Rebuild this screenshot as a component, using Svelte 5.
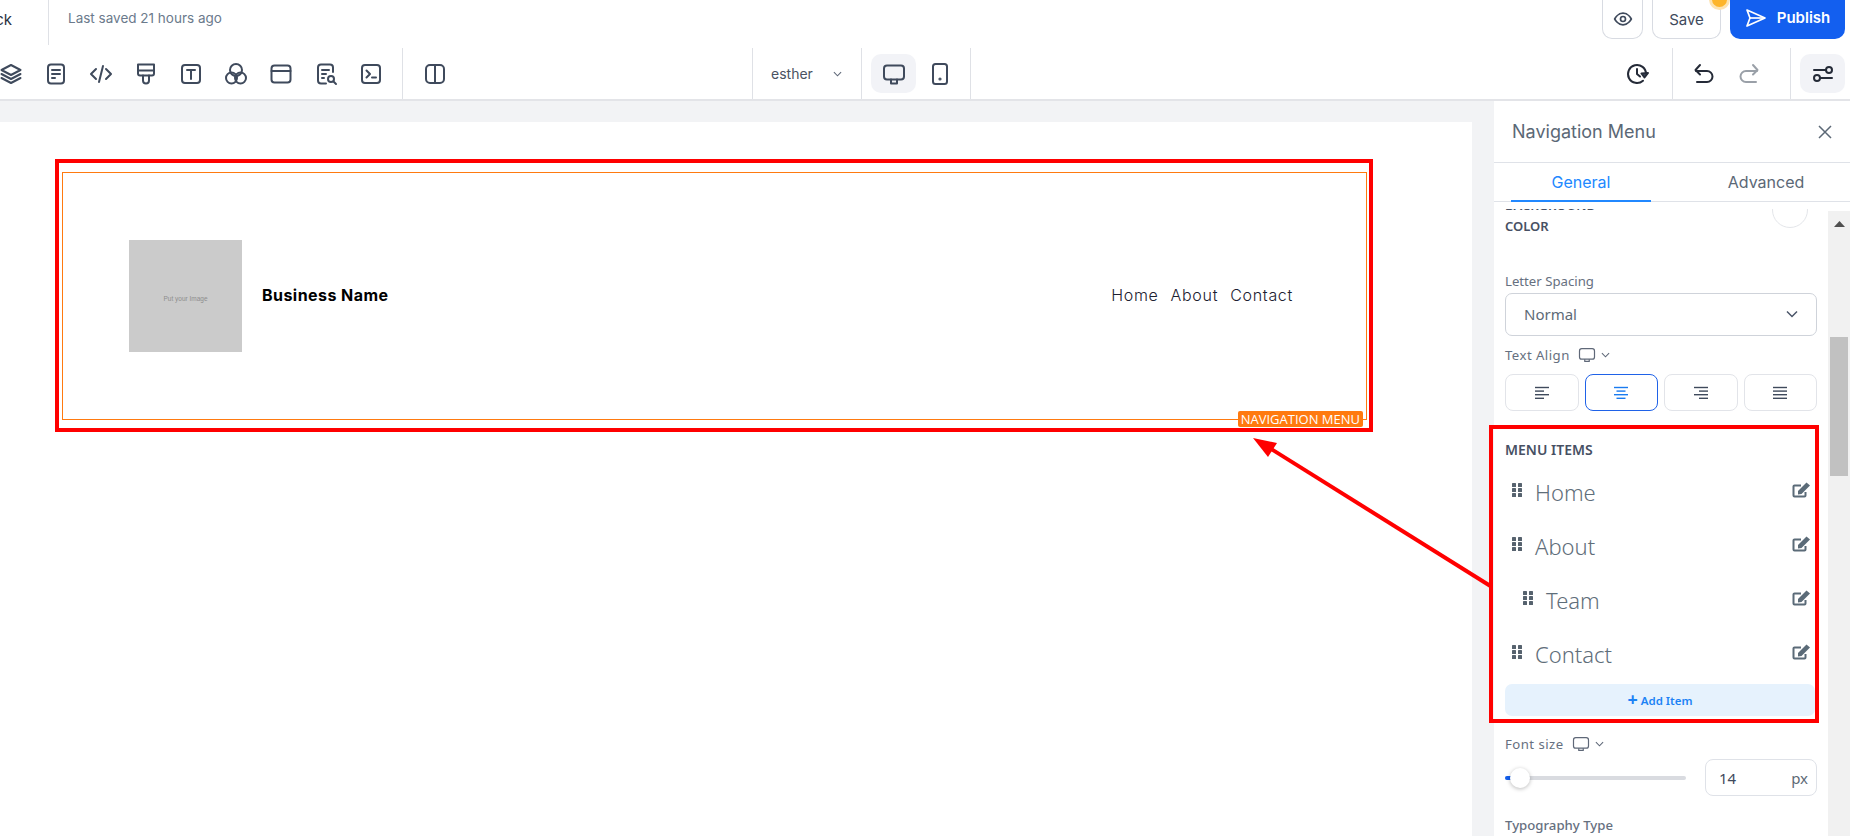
<script>
  const menu = [
    { label: 'Home', sub: false },
    { label: 'About', sub: false },
    { label: 'Team', sub: true },
    { label: 'Contact', sub: false }
  ];
  const aligns = [
    { name: 'left', lines: [[3, 17], [3, 12], [3, 17], [3, 12]] },
    { name: 'center', lines: [[3, 17], [5.5, 14.5], [3, 17], [5.5, 14.5]] },
    { name: 'right', lines: [[3, 17], [8, 17], [3, 17], [8, 17]] },
    { name: 'justify', lines: [[3, 17], [3, 17], [3, 17], [3, 17]] }
  ];
</script>

<div class="app">
  <header class="header">
    <div class="row-top">
      <div class="back"><span>Back</span></div>
      <div class="saved">Last saved 21 hours ago</div>
      <div class="actions">
        <button class="ghost eye" aria-label="Preview">
          <svg width="20" height="20" viewBox="0 0 24 24" fill="none" stroke="#3f4a5c" stroke-width="2"><path d="M2 12s3.6-7 10-7 10 7 10 7-3.6 7-10 7-10-7-10-7z"/><circle cx="12" cy="12" r="3"/></svg>
        </button>
        <div class="save-wrap">
          <button class="ghost save">Save</button>
          <span class="dot"></span>
        </div>
        <button class="publish">
          <svg width="22" height="20" viewBox="0 0 22 20" fill="none" stroke="#fff" stroke-width="1.7" stroke-linejoin="round"><path d="M2 2l18 8-18 8 3-8z"/><path d="M5 10h15"/></svg>
          Publish
        </button>
      </div>
    </div>
    <div class="row-tools">
      <div class="tools">
        <span class="slot"><svg class="ic" viewBox="0 0 24 24"><path d="M12 3l9.500 5-9.500 5-9.500-5z"/><path d="M2.500 12l9.500 5 9.500-5"/><path d="M2.500 16l9.500 5 9.500-5"/></svg></span>
        <span class="slot"><svg class="ic" viewBox="0 0 24 24"><rect x="4" y="2.500" width="16" height="19" rx="3"/><path d="M8 8h8M8 12h8M8 16h3"/></svg></span>
        <span class="slot"><svg class="ic" viewBox="0 0 24 24"><path d="M7 7l-5 5 5 5M17 7l5 5-5 5M14 4l-4 16"/></svg></span>
        <span class="slot"><svg class="ic" viewBox="0 0 24 24"><path d="M4 2.500h16v9a2 2 0 0 1-2 2H6a2 2 0 0 1-2-2z"/><path d="M4 8.500h16"/><path d="M9 13.500v5a3 3 0 0 0 6 0v-5"/></svg></span>
        <span class="slot"><svg class="ic" viewBox="0 0 24 24"><rect x="3" y="3" width="18" height="18" rx="3"/><path d="M8 8h8M12 8v9"/></svg></span>
        <span class="slot"><svg class="ic" viewBox="0 0 24 24"><circle cx="12" cy="8" r="6"/><circle cx="7.500" cy="16" r="5.500"/><circle cx="16.500" cy="16" r="5.500"/></svg></span>
        <span class="slot"><svg class="ic" viewBox="0 0 24 24"><rect x="2.500" y="3.500" width="19" height="17" rx="3"/><path d="M2.500 9h19"/></svg></span>
        <span class="slot"><svg class="ic" viewBox="0 0 24 24"><path d="M19 10V5.500a3 3 0 0 0-3-3H7a3 3 0 0 0-3 3v13a3 3 0 0 0 3 3h5"/><path d="M8 8h7M8 12h4M8 16h2"/><circle cx="17" cy="17" r="3"/><path d="M19.500 19.500L22 22"/></svg></span>
        <span class="slot"><svg class="ic" viewBox="0 0 24 24"><rect x="3" y="3" width="18" height="18" rx="3"/><path d="M7.500 8.500l3.500 3.500-3.500 3.500M13 15.500h4"/></svg></span>
        <span class="vline tools-end"></span>
        <span class="slot split"><svg class="ic" viewBox="0 0 24 24"><rect x="3" y="3" width="18" height="18" rx="4"/><path d="M12 3v18"/></svg></span>
      </div>
      <span class="vline user-start"></span>
      <div class="user">
        <span>esther</span>
        <svg width="9" height="6" viewBox="0 0 10 6" fill="none" stroke="#5f6878" stroke-width="1.2"><path d="M1 1l4 4 4-4"/></svg>
      </div>
      <span class="vline"></span>
      <div class="devices">
        <span class="dev active"><svg class="ic" viewBox="0 0 24 24"><rect x="2" y="3.500" width="20" height="14" rx="3"/><path d="M9 17.500v4h6v-4"/></svg></span>
        <span class="dev"><svg class="ic" viewBox="0 0 24 24"><rect x="5" y="2" width="14" height="20" rx="2.500"/><circle class="fillc" cx="12" cy="17" r="0.600"/></svg></span>
      </div>
      <span class="vline"></span>
      <div class="history">
        <svg class="ic dark" viewBox="0 0 24 24"><path d="M21 12a9 9 0 1 0-3 6.700"/><path d="M12 7v5l3 2.500"/><path class="fillc" d="M23 11l-3.500 4.500-3-4z"/></svg>
      </div>
      <span class="vline"></span>
      <div class="undo">
        <svg class="ic dark" viewBox="0 0 24 24"><path d="M8 3L3.500 8 8 12.500"/><path d="M4 8h11a5.500 5.500 0 0 1 5.500 5.500v0A5.500 5.500 0 0 1 15 19H5" transform="translate(0 1)"/></svg>
        <svg class="ic muted" viewBox="0 0 24 24"><path d="M16 3l4.500 5L16 12.500"/><path d="M20 8H9a5.500 5.500 0 0 0-5.500 5.500v0A5.500 5.500 0 0 0 9 19h10" transform="translate(0 1)"/></svg>
      </div>
      <span class="vline"></span>
      <div class="settings">
        <span class="dev active"><svg class="ic dark" viewBox="0 0 24 24"><path d="M3 8h12M9 16h12"/><circle cx="18" cy="8" r="3"/><circle cx="6" cy="16" r="3"/></svg></span>
      </div>
    </div>
  </header>

  <main class="main">
    <section class="canvas">
      <div class="page">
        <div class="nav-el">
          <div class="thumb"><span>Put your Image</span></div>
          <div class="biz">Business Name</div>
          <nav class="links"><span>Home</span><span>About</span><span>Contact</span></nav>
          <span class="tag">NAVIGATION MENU</span>
        </div>
      </div>
    </section>

    <aside class="panel">
      <div class="p-title">
        <span>Navigation Menu</span>
        <svg width="16" height="16" viewBox="0 0 16 16" fill="none" stroke="#5b6876" stroke-width="1.500"><path d="M2 2l12 12M14 2L2 14"/></svg>
      </div>
      <div class="p-tabs">
        <div class="tab on">General</div>
        <div class="tab">Advanced</div>
      </div>
      <div class="p-body">
        <div class="scroll">
          <div class="bg-row">
            <div class="caps">BACKGROUND<br />COLOR</div>
            <span class="swatch"></span>
          </div>

          <div class="lab ls">Letter Spacing</div>
          <div class="select">
            <span>Normal</span>
            <svg width="12" height="8" viewBox="0 0 12 8" fill="none" stroke="#4a5568" stroke-width="1.500"><path d="M1 1.500l5 5 5-5"/></svg>
          </div>

          <div class="lab ta">
            Text Align
            <svg class="mon" viewBox="0 0 24 24"><rect x="2" y="3.500" width="20" height="14" rx="3"/><path d="M9 17.500v3h6v-3"/></svg>
            <svg class="chev" width="9" height="6" viewBox="0 0 10 6" fill="none" stroke="#5f6878" stroke-width="1.200"><path d="M1 1l4 4 4-4"/></svg>
          </div>
          <div class="aligns">
            {#each aligns as a}
              <div class="al" class:sel={a.name === 'center'}>
                <svg width="20" height="14" viewBox="0 0 20 14">
                  {#each a.lines as l, j}
                    <line x1={l[0]} x2={l[1]} y1={1.500 + j * 3.600} y2={1.500 + j * 3.600} />
                  {/each}
                </svg>
              </div>
            {/each}
          </div>

          <div class="caps mi">MENU ITEMS</div>
          <div class="items">
            {#each menu as m}
              <div class="item" class:sub={m.sub}>
                <svg class="grip" width="10" height="14" viewBox="0 0 10 14">
                  <rect x="0" y="0" width="4" height="4" rx=".6"/><rect x="6" y="0" width="4" height="4" rx=".6"/>
                  <rect x="0" y="5" width="4" height="4" rx=".6"/><rect x="6" y="5" width="4" height="4" rx=".6"/>
                  <rect x="0" y="10" width="4" height="4" rx=".6"/><rect x="6" y="10" width="4" height="4" rx=".6"/>
                </svg>
                <span class="it-label">{m.label}</span>
                <svg class="edit" width="19" height="17" viewBox="0 0 19 17">
                  <path d="M13.500 10v3.500a1 1 0 0 1-1 1H2.500a1 1 0 0 1-1-1V4.500a1 1 0 0 1 1-1H9" fill="none" stroke="#5b6b78" stroke-width="2"/>
                  <path d="M6 9l8.500-8.500 3.500 3L9.500 12 6 12.500z" fill="#5b6b78"/>
                </svg>
              </div>
            {/each}
          </div>
          <div class="add"><span class="plus">+</span> Add Item</div>

          <div class="lab fs">
            Font size
            <svg class="mon" viewBox="0 0 24 24"><rect x="2" y="3.500" width="20" height="14" rx="3"/><path d="M9 17.500v3h6v-3"/></svg>
            <svg class="chev" width="9" height="6" viewBox="0 0 10 6" fill="none" stroke="#5f6878" stroke-width="1.200"><path d="M1 1l4 4 4-4"/></svg>
          </div>
          <div class="size-row">
            <div class="slider"><span class="fill"></span><span class="knob"></span></div>
            <div class="num"><span class="v">14</span><span>px</span></div>
          </div>
          <div class="lab tt">Typography Type</div>
        </div>
        <div class="bar">
          <svg width="11" height="6" viewBox="0 0 11 6"><path d="M5.500 0l5.500 6H0z" fill="#505050"/></svg>
          <span class="thumb-bar"></span>
        </div>
      </div>
    </aside>
  </main>

  <svg class="notes" width="1850" height="836" viewBox="0 0 1850 836">
    <rect x="57" y="161" width="1314" height="269" fill="none" stroke="#ff0000" stroke-width="4"/>
    <rect x="1491" y="427" width="326" height="294" fill="none" stroke="#ff0000" stroke-width="4"/>
    <path d="M1492 587L1268 447" stroke="#ff0000" stroke-width="4" fill="none"/>
    <path d="M1253 438l24 5-9 14z" fill="#ff0000"/>
  </svg>
</div>

<style>
  :global(body) { margin: 0; background: #fff; }
  .app {
    position: relative;
    width: 1850px;
    height: 836px;
    overflow: hidden;
    display: flex;
    flex-direction: column;
    font-family: Inter, "Noto Sans", sans-serif;
    color: #3f4a5c;
  }
  button { font-family: inherit; cursor: pointer; }

  .header {
    height: 101px;
    flex: none;
    box-sizing: border-box;
    border-bottom: 2px solid #e3e4e8;
    background: #fff;
  }
  .row-top { height: 45px; display: flex; align-items: center; margin-bottom: 3px; }
  .back {
    width: 12px;
    height: 39px;
    display: flex;
    justify-content: flex-end;
    align-items: center;
    padding: 0 36px 6px 0;
    border-right: 1px solid #dfe1e6;
    font-size: 15px;
    color: #2b3240;
    white-space: nowrap;
    flex: none;
  }
  .saved { margin-left: 19px; font-size: 13.500px; color: #6b7a8c; position: relative; top: -5px; }
  .actions { margin-left: auto; padding-right: 5px; display: flex; align-self: flex-start; gap: 9px; height: 39px; }
  .ghost {
    background: #fff;
    border: 1px solid #d8dbe2;
    border-top: 0;
    border-radius: 0 0 10px 10px;
    height: 39px;
    padding: 0;
  }
  .eye { width: 41px; display: flex; align-items: center; justify-content: center; }
  .save-wrap { position: relative; }
  .save { width: 69px; font-size: 15px; color: #3f4a5c; }
  .dot {
    position: absolute;
    right: -6px;
    top: -8px;
    width: 15px;
    height: 15px;
    border-radius: 50%;
    background: #fdb52a;
    box-shadow: 0 0 0 3px #fde3b0;
  }
  .publish {
    width: 115px;
    height: 39px;
    border: 0;
    border-radius: 0 0 10px 10px;
    background: #135fef;
    color: #fff;
    font-size: 15px;
    font-weight: 600;
    display: flex;
    align-items: center;
    justify-content: center;
    gap: 10px;
    padding: 0 0 4px;
  }

  .row-tools { height: 51px; display: flex; align-items: stretch; }
  .tools { display: flex; align-items: center; margin-left: -12px; width: 764px; flex: none; }
  .slot { width: 45px; display: flex; justify-content: center; align-items: center; flex: none; }
  .split { margin-left: 9px; }
  .vline { width: 1px; background: #dfe1e6; flex: none; align-self: stretch; }
  .tools-end { margin-left: 9px; height: 51px; }
  .user {
    width: 108px;
    flex: none;
    box-sizing: border-box;
    padding: 0 19px 0 18px;
    display: flex;
    align-items: center;
    justify-content: space-between;
    font-size: 14px;
    color: #4a5262;
  }
  .devices { width: 108px; flex: none; display: flex; align-items: center; padding-left: 9px; box-sizing: border-box; gap: 1px; }
  .dev { width: 45px; height: 39px; border-radius: 10px; display: flex; align-items: center; justify-content: center; flex: none; }
  .dev.active { background: #f2f3f7; }
  .history { width: 701px; flex: none; display: flex; align-items: center; justify-content: flex-end; padding-right: 23px; box-sizing: border-box; }
  .undo { width: 117px; flex: none; display: flex; align-items: center; gap: 21px; padding-left: 19px; box-sizing: border-box; }
  .settings { flex: none; padding-left: 9px; display: flex; align-items: center; }
  .ic {
    width: 24px; height: 24px;
    fill: none;
    stroke: #3f4a5c;
    stroke-width: 2;
    stroke-linecap: round;
    stroke-linejoin: round;
  }
  .ic.dark { stroke: #252b38; }
  .ic.muted { stroke: #9aa0a8; }
  .fillc { fill: currentColor; }

  .main { flex: 1; min-height: 0; display: flex; }
  .canvas { flex: 1; min-width: 0; background: #f2f3f5; padding: 21px 22px 0 0; display: flex; }
  .page { flex: 1; background: #fff; padding: 50px 105px 0 62px; }
  .nav-el {
    position: relative;
    height: 248px;
    box-sizing: border-box;
    border: 1px solid #ff7a0f;
    display: flex;
    align-items: center;
    padding: 0 73px 0 66px;
  }
  .thumb {
    width: 113px;
    height: 112px;
    background: #cbcbcb;
    display: flex;
    align-items: center;
    justify-content: center;
    flex: none;
    margin-top: -1px;
  }
  .thumb span { font: 6.500px "Liberation Sans", sans-serif; color: #8d8d8d; position: relative; top: 3px; }
  .biz { margin: -2px 0 0 20px; font-family: Inter, sans-serif; font-weight: 700; font-size: 16px; color: #000; letter-spacing: .45px; }
  .links { margin: -2px 0 0 auto; display: flex; gap: 12px; font-family: Inter, sans-serif; font-size: 16px; color: #1c2030; font-weight: 300; letter-spacing: .7px; }
  .tag {
    position: absolute;
    right: 3px;
    bottom: -8px;
    height: 16px;
    line-height: 16px;
    padding: 0 3px;
    background: #ff7a0f;
    color: #fff;
    font-family: "Open Sans", sans-serif;
    font-size: 13px;
    border-radius: 2px;
    white-space: nowrap;
  }

  .panel {
    width: 356px;
    flex: none;
    background: #fff;
    display: flex;
    flex-direction: column;
    min-height: 0;
  }
  .p-title {
    height: 62px;
    box-sizing: border-box;
    flex: none;
    border-bottom: 1px solid #dfe2e8;
    display: flex;
    align-items: center;
    justify-content: space-between;
    padding: 0 17px 0 18px;
    font-size: 18px;
    color: #5b6876;
  }
  .p-tabs { height: 39px; box-sizing: border-box; flex: none; display: flex; border-bottom: 1px solid #dfe2e8; padding-left: 17px; }
  .tab { width: 140px; display: flex; align-items: center; justify-content: center; font-size: 16px; color: #5b6876; }
  .tab + .tab { margin-left: 45px; }
  .tab.on { color: #2188ff; box-shadow: 0 1px 0 0 #2188ff, inset 0 -1px 0 0 #2188ff; }

  .p-body { flex: 1; min-height: 0; display: flex; }
  .scroll {
    width: 334px;
    box-sizing: border-box;
    flex: none;
    margin-top: 7px;
    padding: 0 11px 0 11px;
    overflow: hidden;
    font-family: "Noto Sans", sans-serif;
  }
  .bar { flex: 1; margin-top: 9px; background: #f1f1f1; padding-top: 10px; display: flex; flex-direction: column; align-items: center; }
  .thumb-bar { width: 18px; height: 139px; background: #c1c1c1; margin-top: 110px; }

  .caps { font-size: 13px; font-weight: 600; line-height: 21px; color: #475063; }
  .bg-row { display: flex; justify-content: space-between; margin-top: -14px; height: 42px; }
  .swatch {
    width: 36px;
    height: 36px;
    box-sizing: border-box;
    border: 1px solid #e4e6ea;
    border-radius: 50%;
    margin: -3px 9px 0 0;
  }
  .lab { font-size: 13.200px; line-height: 18px; color: #667080; display: flex; align-items: center; gap: 8px; }
  .chev { margin-left: -3px; }
  .ls { margin-top: 35px; }
  .ta { margin-top: 10px; letter-spacing: .45px; }
  .fs { margin-top: 19px; letter-spacing: .45px; }
  .tt { margin-top: 20px; font-weight: 500; }
  .mon { width: 18px; height: 18px; fill: none; stroke: #5f6878; stroke-width: 1.600; stroke-linejoin: round; }
  .select {
    margin-top: 3px;
    height: 43px;
    box-sizing: border-box;
    border: 1px solid #cfd3da;
    border-radius: 7px;
    display: flex;
    align-items: center;
    justify-content: space-between;
    padding: 0 18px 2px;
    font-size: 15px;
    color: #5d6a76;
  }
  .aligns { margin-top: 10px; display: grid; grid-template-columns: repeat(4, 1fr); gap: 6px; }
  .al {
    height: 37px;
    box-sizing: border-box;
    border: 1px solid #e2e4e9;
    border-radius: 8px;
    display: flex;
    align-items: center;
    justify-content: center;
    stroke: #3f4a5c;
  }
  .al line { stroke-width: 1.400; }
  .al.sel { border-color: #1f62e8; stroke: #1a7bf0; }
  .mi { margin-top: 30px; font-size: 14px; line-height: 18px; }
  .items { margin-top: 6px; }
  .item {
    height: 54px;
    display: flex;
    align-items: center;
    padding: 0 6px 0 7px;
  }
  .item.sub { padding-left: 18px; }
  .grip { fill: #56626e; margin-top: -4px; flex: none; }
  .it-label { margin-left: 13px; font-size: 22px; color: #5f6e7a; font-weight: 300; }
  .edit { margin-left: auto; margin-top: -3px; }
  .add {
    margin: 3px 2px 0 0;
    height: 32px;
    background: #e6f2fd;
    border-radius: 7px;
    color: #1c82f5;
    font-size: 11.500px;
    font-weight: 600;
    display: flex;
    align-items: center;
    justify-content: center;
    gap: 3px;
  }
  .plus { font-size: 18px; line-height: 1; font-weight: 700; position: relative; top: -1px; }
  .size-row { margin-top: 6px; height: 37px; display: flex; align-items: center; justify-content: space-between; }
  .slider { position: relative; width: 181px; height: 4px; background: #d9dbe0; border-radius: 2px; }
  .fill { position: absolute; left: 0; top: 0; width: 10px; height: 4px; background: #135fef; border-radius: 2px; }
  .knob {
    position: absolute;
    left: 5px;
    top: -8px;
    width: 20px;
    height: 20px;
    border-radius: 50%;
    background: #fff;
    box-shadow: 0 1px 4px rgba(0, 0, 0, .28);
  }
  .num {
    width: 112px;
    height: 37px;
    box-sizing: border-box;
    border: 1px solid #dfe2e8;
    border-radius: 8px;
    display: flex;
    align-items: center;
    justify-content: space-between;
    padding: 0 8px 0 13px;
    font-size: 15px;
    color: #5d6a76;
  }
  .v { color: #3f4a5c; }

  .notes { position: absolute; left: 0; top: 0; pointer-events: none; }
</style>
